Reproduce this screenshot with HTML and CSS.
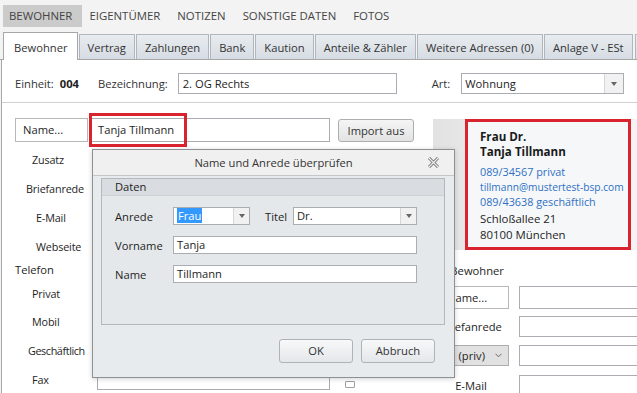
FILE: index.html
```html
<!DOCTYPE html>
<html lang="de">
  <head>
    <meta charset="UTF-8" />
    <meta name="viewport" content="width=device-width, initial-scale=1.0" />
    <title>Bewohner</title>
    <link rel="stylesheet" href="styles.css">
  </head>
  <body>
    <!-- Hauptmenü -->
    <div class="menubar">
      <span class="menu-item active">BEWOHNER</span>
      <span class="menu-item">EIGENTÜMER</span>
      <span class="menu-item">NOTIZEN</span>
      <span class="menu-item">SONSTIGE DATEN</span>
      <span class="menu-item">FOTOS</span>
    </div>

    <!-- Reiter -->
    <div class="tabs">
      <span class="tab active">Bewohner</span>
      <span class="tab">Vertrag</span>
      <span class="tab">Zahlungen</span>
      <span class="tab">Bank</span>
      <span class="tab">Kaution</span>
      <span class="tab">Anteile &amp; Zähler</span>
      <span class="tab">Weitere Adressen (0)</span>
      <span class="tab">Anlage V - ESt</span>
      <span class="tab tab-more"></span>
    </div>

    <div class="page">
      <div class="unit-row">
        <span class="unit-label">Einheit:</span>
        <span class="unit-no">004</span>
        <span class="unit-label bez-label">Bezeichnung:</span>
        <div class="input input-bez">2. OG Rechts</div>
        <span class="unit-label art-label">Art:</span>
        <div class="combo combo-art">
          <span class="combo-text">Wohnung</span>
          <span class="combo-drop"><span class="tri"></span></span>
        </div>
      </div>

      <div class="main">
        <!-- linke Spalte: Bewohner 1 -->
        <div class="col-left">
          <div class="name-row">
            <div class="btn-name">Name...</div>
            <div class="name-wrap">
              <div class="input input-name">Tanja Tillmann</div>
              <div class="highlight"></div>
            </div>
            <div class="btn-import">Import aus</div>
          </div>

          <div class="form-row first"><span class="lbl">Zusatz</span><div class="input field"></div></div>
          <div class="form-row"><span class="lbl lbl-long">Briefanrede</span><div class="input field"></div></div>
          <div class="form-row"><span class="lbl lbl-short">E-Mail</span><div class="input field"></div></div>
          <div class="form-row"><span class="lbl lbl-short">Webseite</span><div class="input field"></div></div>
          <div class="form-head">Telefon</div>
          <div class="form-row tel-first"><span class="lbl">Privat</span><div class="input field"></div><span class="tel-icon"></span></div>
          <div class="form-row tel-second"><span class="lbl">Mobil</span><div class="input field"></div><span class="tel-icon"></span></div>
          <div class="form-row"><span class="lbl lbl-mid">Geschäftlich</span><div class="input field"></div><span class="tel-icon"></span></div>
          <div class="form-row"><span class="lbl">Fax</span><div class="input field"></div><span class="tel-icon"></span></div>
        </div>

        <!-- rechte Spalte: Adresskarte + Bewohner 2 -->
        <div class="col-right">
          <div class="card-panel">
            <div class="card">
              <div class="card-name">Frau Dr.<br />Tanja Tillmann</div>
              <div class="card-contact">
                <div>089/34567 privat</div>
                <div class="card-mail">tillmann@mustertest-bsp.com</div>
                <div>089/43638 geschäftlich</div>
              </div>
              <div class="card-address">Schloßallee 21<br />80100 München</div>
            </div>
          </div>

          <div class="r-title">2. Bewohner</div>
          <div class="r-row r-name">
            <div class="r-btn">Name...</div>
            <div class="input r-input"></div>
          </div>
          <div class="r-row r-brief">
            <span class="r-cell">Briefanrede</span>
            <div class="input r-input"></div>
          </div>
          <div class="r-row r-tel">
            <div class="r-select">
              <span>(priv)</span>
              <svg width="7" height="5" viewBox="0 0 7 5"><path d="M0.5 0.8L3.5 3.8L6.5 0.8" stroke="#666" fill="none" /></svg>
            </div>
            <div class="input r-input"></div>
          </div>
          <div class="r-row r-mail">
            <span class="r-cell">E-Mail</span>
            <div class="input r-input"></div>
          </div>
        </div>
      </div>
    </div>

    <!-- Dialog -->
    <div class="dialog">
      <div class="dlg-title">
        Name und Anrede überprüfen
        <svg class="dlg-close" width="11" height="11" viewBox="0 0 11 11">
          <path d="M1 1L10 10M10 1L1 10" stroke="#6f6f6f" stroke-width="3" />
          <path d="M1 1L10 10M10 1L1 10" stroke="#f0f0f0" stroke-width="1.2" />
        </svg>
      </div>
      <div class="dlg-body">
        <div class="group">
          <div class="group-head">Daten</div>
          <div class="group-fields">
            <div class="dlg-row">
              <span class="dlg-lbl">Anrede</span>
              <div class="combo combo-anrede">
                <span class="combo-text"><span class="selected">Frau</span></span>
                <span class="combo-drop"><span class="tri"></span></span>
              </div>
              <span class="dlg-lbl-titel">Titel</span>
              <div class="combo combo-titel">
                <span class="combo-text">Dr.</span>
                <span class="combo-drop"><span class="tri"></span></span>
              </div>
            </div>
            <div class="dlg-row">
              <span class="dlg-lbl">Vorname</span>
              <div class="input dlg-input">Tanja</div>
            </div>
            <div class="dlg-row">
              <span class="dlg-lbl">Name</span>
              <div class="input dlg-input">Tillmann</div>
            </div>
          </div>
        </div>
      </div>
      <div class="dlg-footer">
        <div class="dlg-btn">OK</div>
        <div class="dlg-btn">Abbruch</div>
      </div>
    </div>
  </body>
</html>
```

FILE: styles.css
```css
/* Grundlayout */
body {
  margin: 0;
  width: 637px;
  height: 393px;
  overflow: hidden;
  position: relative;
  background: #f3f3f3;
  font-family: "Open Sans", "Noto Sans", sans-serif;
  font-size: 11.2px;
  color: #1e1e1e;
}

/* Hauptmenü */
.menubar {
  display: flex;
  gap: 1px;
  height: 32px;
  padding: 5px 0 0 3px;
  box-sizing: border-box;
}

.menu-item {
  height: 22px;
  line-height: 22px;
  padding: 0 10px 0 6px;
  font-size: 11.4px;
  color: #444;
}

.menu-item.active {
  background: #cbcbcb;
}

/* Reiter */
.tabs {
  display: flex;
  align-items: flex-end;
  height: 28px;
  padding-left: 3px;
  border-bottom: 1px solid #a7a7a7;
  box-sizing: border-box;
  white-space: nowrap;
}

.tab {
  height: 25px;
  box-sizing: border-box;
  padding: 2px 8px 0;
  line-height: 22px;
  border: 1px solid #b0b6bd;
  border-bottom: none;
  margin-right: 1px;
  background: linear-gradient(#e8ecf0, #d6dce3);
  color: #333;
}

.tab.active {
  height: 28px;
  padding: 4px 9px 0 10px;
  margin-bottom: -1px;
  background: #fff;
  border-color: #a7a7a7;
}

.tab-more {
  width: 40px;
  margin-left: 1px;
}

/* Seite */
.page {
  height: 340px;
  margin-left: 1px;
  border-left: 1px solid #a7a7a7;
  background: #fff;
}

.unit-row {
  display: flex;
  align-items: center;
  height: 21px;
  padding: 13px 0 8px 13px;
  border-bottom: 1px solid #d0d0d0;
}

.unit-label {
  color: #333;
}

.unit-no {
  margin-left: 6px;
  font-weight: bold;
}

.bez-label {
  margin-left: 19px;
}

.art-label {
  margin-left: 35px;
}

/* Eingabefelder */
.input {
  box-sizing: border-box;
  height: 21px;
  line-height: 19px;
  padding: 0 4px;
  border: 1px solid #abadb3;
  background: #fff;
  white-space: nowrap;
}

.input-bez {
  width: 219px;
  margin-left: 10px;
}

.combo {
  display: flex;
  box-sizing: border-box;
  border: 1px solid #abadb3;
  background: #fff;
}

.combo-text {
  flex: 1;
  padding-left: 3px;
  white-space: nowrap;
}

.combo-drop {
  display: flex;
  align-items: center;
  justify-content: center;
  width: 16px;
  border-left: 1px solid #d6d6d6;
  background: #f1f1f1;
}

.tri {
  border-left: 3.5px solid transparent;
  border-right: 3.5px solid transparent;
  border-top: 4px solid #666;
}

.combo-art {
  width: 163px;
  height: 21px;
  line-height: 19px;
  margin-left: 11px;
}

.combo-art .combo-drop {
  width: 18px;
}

/* Hauptbereich */
.main {
  display: flex;
  padding: 15px 0 0 13px;
}

.col-left {
  flex-shrink: 0;
  width: 400px;
}

.name-row {
  display: flex;
  align-items: center;
  height: 24px;
}

.btn-name {
  box-sizing: border-box;
  width: 73px;
  height: 24px;
  line-height: 22px;
  padding-left: 7px;
  border: 1px solid #b8b8b8;
  background: #fff;
}

.name-wrap {
  position: relative;
  margin-left: 2px;
}

.input-name {
  width: 240px;
  height: 24px;
  line-height: 22px;
  padding-left: 7px;
}

/* rote Markierung */
.highlight {
  position: absolute;
  left: -1px;
  top: -5px;
  width: 98px;
  height: 34px;
  box-sizing: border-box;
  border: 3px solid #d9232e;
}

.btn-import {
  box-sizing: border-box;
  width: 76px;
  height: 23px;
  line-height: 21px;
  margin-left: 8px;
  text-align: center;
  border: 1px solid #adadad;
  border-radius: 3px;
  background: linear-gradient(#f5f5f5, #e3e3e3);
  color: #333;
}

.form-row {
  display: flex;
  align-items: center;
  height: 22px;
  margin-top: 7px;
}

.form-row.first {
  margin-top: 6px;
}

.form-row.tel-first {
  margin-top: 3px;
}

.form-row.tel-second {
  margin-top: 6px;
}

.form-head {
  height: 18px;
  line-height: 18px;
  margin-top: 4px;
}

.lbl {
  box-sizing: border-box;
  width: 82px;
  padding-left: 17px;
  font-size: 10.8px;
  letter-spacing: -0.15px;
  white-space: nowrap;
}

.lbl-long {
  padding-left: 11px;
}

.lbl-short {
  padding-left: 21px;
}

.lbl-mid {
  padding-left: 13px;
  letter-spacing: -0.4px;
}

.field {
  width: 233px;
}

.tel-icon {
  width: 8px;
  height: 5px;
  margin: 10px 0 0 15px;
  border: 1px solid #a0a0a0;
  border-radius: 1px;
}

/* rechte Spalte */
.col-right {
  flex-shrink: 0;
  width: 220px;
  margin-left: 18px;
}

.card-panel {
  height: 131px;
  margin-top: 1px;
  padding-left: 32px;
  background: linear-gradient(90deg, #e2e2e2, #eeeeee 40%, #f4f4f4);
}

.card {
  box-sizing: border-box;
  width: 166px;
  height: 131px;
  padding: 7px 0 0 12px;
  border: 3px solid #d9232e;
  background: #f5f7f9;
  white-space: nowrap;
}

.card-name {
  font-weight: bold;
  font-size: 11.6px;
  line-height: 15px;
  color: #1a1a1a;
}

.card-contact {
  margin-top: 5px;
  font-size: 10.8px;
  line-height: 16px;
  color: #2f70c4;
}

.card-mail {
  font-size: 10.2px;
  line-height: 14px;
}

.card-address {
  margin-top: 1px;
  font-size: 11.4px;
  line-height: 16px;
}

.r-title {
  width: 76px;
  height: 16px;
  line-height: 16px;
  margin-top: 13px;
  text-align: center;
  white-space: nowrap;
}

.r-row {
  display: flex;
  align-items: center;
  margin-top: 7px;
}

.r-name {
  height: 23px;
}

.r-brief {
  height: 21px;
}

.r-tel {
  height: 21px;
  margin-top: 8px;
}

.r-mail {
  height: 21px;
  margin-top: 9px;
}

.r-btn {
  box-sizing: border-box;
  width: 70px;
  height: 23px;
  line-height: 21px;
  margin-left: 6px;
  padding-left: 7px;
  border: 1px solid #b8b8b8;
  background: #fff;
}

.r-cell {
  width: 76px;
  text-align: center;
}

.r-select {
  display: flex;
  align-items: center;
  justify-content: flex-end;
  gap: 10px;
  box-sizing: border-box;
  width: 76px;
  height: 21px;
  padding-right: 6px;
  border: 1px solid #adadad;
  background: #e1e1e1;
}

.r-input {
  width: 130px;
  height: 100%;
  margin-left: 10px;
}

/* Dialog */
.dialog {
  position: absolute;
  left: 92px;
  top: 149px;
  width: 363px;
  height: 229px;
  box-sizing: border-box;
  border: 1px solid #8e9092;
  background: #e8ebee;
  box-shadow: 0 1px 5px rgba(0, 0, 0, 0.18);
}

.dlg-title {
  position: relative;
  height: 25px;
  line-height: 25px;
  text-align: center;
  background: #f0f0f0;
  border-bottom: 1px solid #c4c7ca;
  color: #333;
}

.dlg-close {
  position: absolute;
  right: 15px;
  top: 7px;
}

.dlg-body {
  padding: 2px 9px 0 8px;
}

.group {
  box-sizing: border-box;
  height: 147px;
  border: 1px solid #b4b8bd;
  background: #e5e8eb;
}

.group-head {
  height: 16px;
  line-height: 16px;
  padding-left: 13px;
  border-bottom: 1px solid #cdd1d5;
  background: #d9dde1;
}

.group-fields {
  padding: 11px 0 0 13px;
}

.dlg-row {
  display: flex;
  align-items: center;
  height: 18px;
  margin-bottom: 11px;
}

.dlg-lbl {
  width: 58px;
}

.dlg-lbl-titel {
  width: 28px;
  margin-left: 15px;
}

.combo-anrede {
  width: 77px;
  height: 18px;
  line-height: 16px;
}

.combo-titel {
  width: 124px;
  height: 18px;
  line-height: 16px;
}

.combo-anrede .combo-drop,
.combo-titel .combo-drop {
  width: 15px;
}

.selected {
  padding: 0 1px;
  background: #3399ff;
  color: #fff;
}

.dlg-input {
  width: 244px;
  height: 18px;
  line-height: 16px;
  padding-left: 3px;
}

.dlg-footer {
  display: flex;
  justify-content: flex-end;
  gap: 8px;
  padding: 14px 19px 0 0;
}

.dlg-btn {
  box-sizing: border-box;
  width: 74px;
  height: 24px;
  line-height: 22px;
  text-align: center;
  border: 1px solid #aeb3b8;
  border-radius: 3px;
  background: linear-gradient(#f7f8f9, #e4e7ea);
  color: #333;
}
```
